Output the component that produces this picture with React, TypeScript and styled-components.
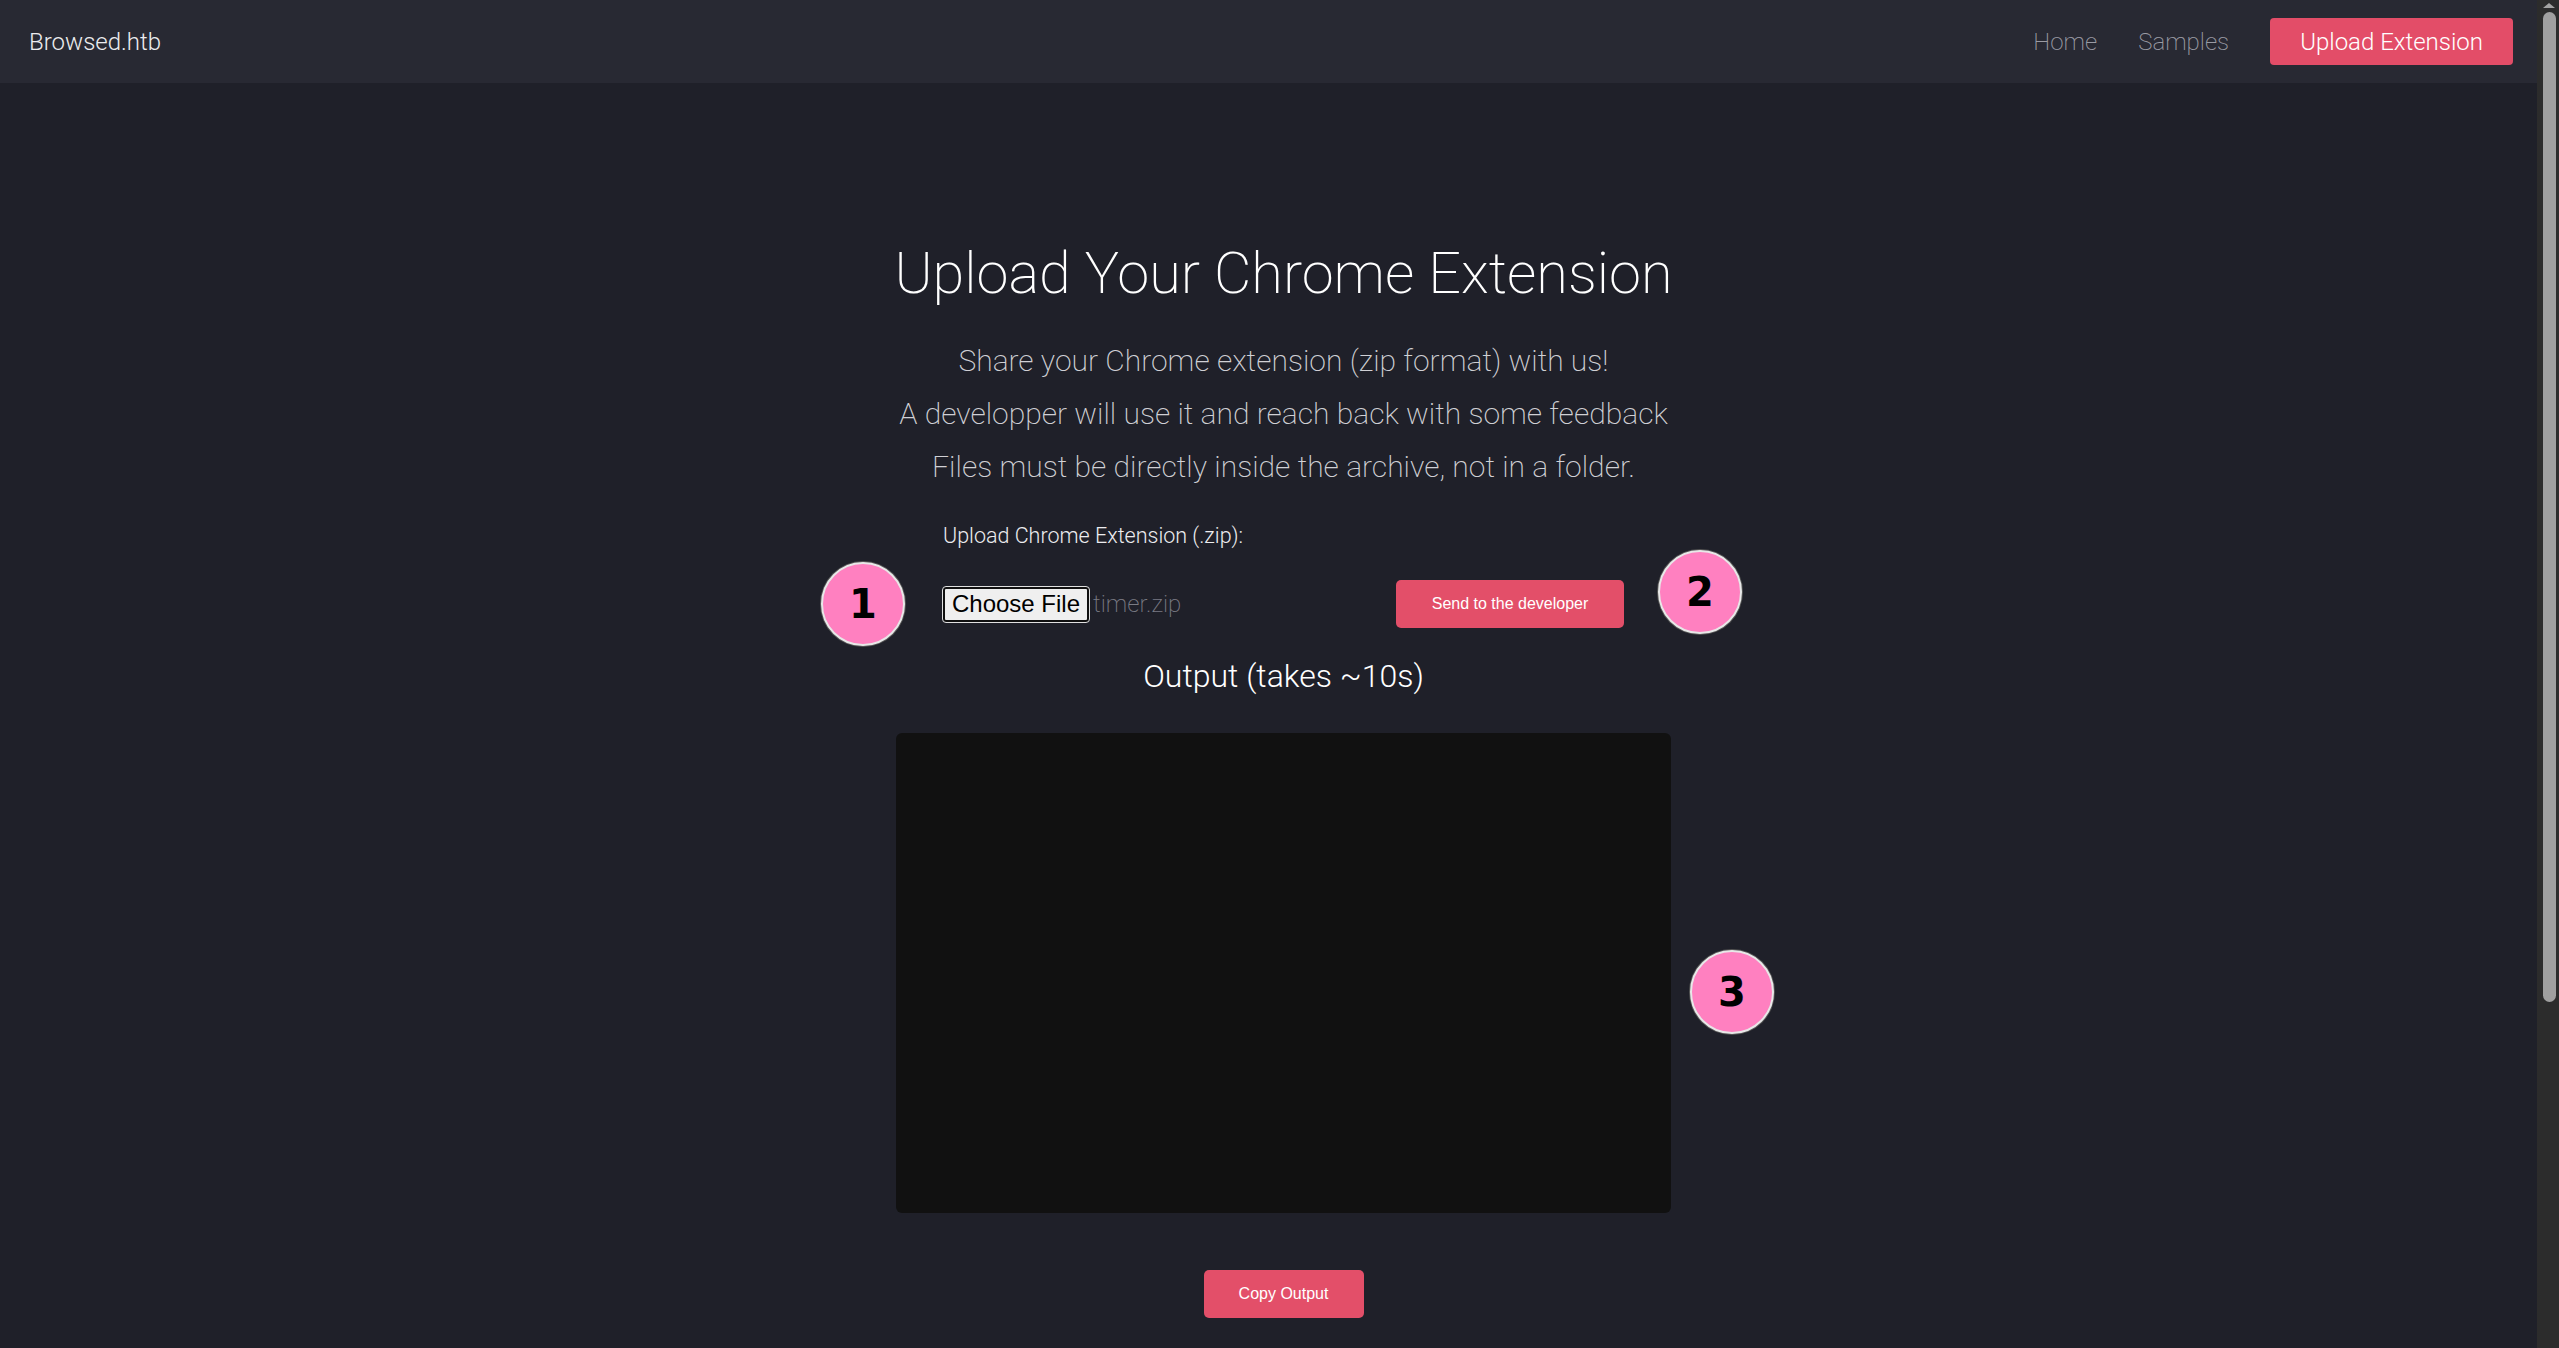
import styled, { createGlobalStyle } from "styled-components";

const GlobalStyle = createGlobalStyle`
  body {
    margin: 0;
    background: #1f2029;
    font-family: Roboto, "Noto Sans", sans-serif;
    color: #ffffff;
  }
`;

export default function App(): JSX.Element {
  return (
    <Shell>
      <GlobalStyle />
      <Pane>
        <NavBar>
          <Brand>Browsed.htb</Brand>
          <NavLinks>
            <NavLink>Home</NavLink>
            <NavLink>Samples</NavLink>
            <NavButton>Upload Extension</NavButton>
          </NavLinks>
        </NavBar>
        <Main>
          <Title>Upload Your Chrome Extension</Title>
          <Lead>
            <LeadLine>Share your Chrome extension (zip format) with us!</LeadLine>
            <LeadLine>A developper will use it and reach back with some feedback</LeadLine>
            <LeadLine>Files must be directly inside the archive, not in a folder.</LeadLine>
          </Lead>
          <UploadForm>
            <FieldLabel>Upload Chrome Extension (.zip):</FieldLabel>
            <FormRow>
              <FilePicker>
                <ChooseButton type="button">Choose File</ChooseButton>
                <FileName>timer.zip</FileName>
              </FilePicker>
              <PinkButton type="button" $wide>
                Send to the developer
              </PinkButton>
            </FormRow>
          </UploadForm>
          <OutputTitle>Output (takes ~10s)</OutputTitle>
          <OutputBox />
          <PinkButton type="button">Copy Output</PinkButton>
        </Main>
        <Marker style={{ left: 821, top: 562 }}>1</Marker>
        <Marker style={{ left: 1658, top: 550 }}>2</Marker>
        <Marker style={{ left: 1690, top: 950 }}>3</Marker>
      </Pane>
      <ScrollBar>
        <ScrollArrow />
        <ScrollThumb />
      </ScrollBar>
    </Shell>
  );
}

const Shell = styled("div")`
  display: flex;
  height: 100vh;
  overflow: hidden;
`;
const Pane = styled("div")`
  position: relative;
  flex: 1;
  min-width: 0;
`;
const ScrollBar = styled("div")`
  width: 22px;
  display: flex;
  flex-direction: column;
  align-items: center;
  padding-top: 3px;
  padding-left: 2px;
  box-sizing: border-box;
  background: #2c2c2c;
`;
const ScrollArrow = styled("div")`
  width: 0;
  height: 0;
  border-left: 6px solid transparent;
  border-right: 6px solid transparent;
  border-bottom: 5px solid #a3a3a3;
`;
const ScrollThumb = styled("div")`
  width: 13px;
  height: 990px;
  margin-top: 4px;
  border-radius: 7px;
  background: #a0a0a0;
`;
const NavBar = styled("nav")`
  display: flex;
  align-items: center;
  justify-content: space-between;
  height: 83px;
  padding: 0 24px 0 29px;
  background: #282933;
`;
const Brand = styled("div")`
  font-size: 24px;
  font-weight: 300;
  color: #ececef;
`;
const NavLinks = styled("div")`
  display: flex;
  align-items: center;
`;
const NavLink = styled("a")`
  font-size: 24px;
  font-weight: 200;
  color: #9a9ba4;
  margin-right: 41px;
  cursor: pointer;
`;
const NavButton = styled("button")`
  height: 47px;
  padding: 0 30px;
  border: none;
  border-radius: 4px;
  background: #e34d68;
  color: #ffffff;
  font-family: Roboto, sans-serif;
  font-size: 24px;
  font-weight: 300;
  cursor: pointer;
`;
const Main = styled("main")`
  display: flex;
  flex-direction: column;
  align-items: center;
  padding: 150px 0 0 30px;
`;
const Title = styled("h1")`
  margin: 0;
  font-size: 57.6px;
  line-height: 82px;
  font-weight: 200;
  color: #ffffff;
`;
const Lead = styled("div")`
  margin-top: 19px;
  text-align: center;
`;
const LeadLine = styled("p")`
  margin: 0;
  font-size: 30px;
  line-height: 53px;
  font-weight: 200;
  color: #d0d0d5;
`;
const UploadForm = styled("form")`
  width: 681px;
  margin-top: 28px;
`;
const FieldLabel = styled("label")`
  display: block;
  font-size: 21.5px;
  line-height: 30px;
  font-weight: 300;
  color: #ececef;
`;
const FormRow = styled("div")`
  display: flex;
  align-items: center;
  justify-content: space-between;
  margin-top: 29px;
`;
const FilePicker = styled("div")`
  display: flex;
  align-items: center;
  gap: 4px;
`;
const ChooseButton = styled("button")`
  height: 35px;
  width: 146px;
  padding: 0;
  border: 2px solid #101010;
  outline: 1px solid #e0e0e0;
  border-radius: 3px;
  background: #efefef;
  color: #000000;
  font-family: "Liberation Sans", Arial, sans-serif;
  font-size: 24px;
`;
const FileName = styled("span")`
  font-size: 24px;
  font-weight: 200;
  color: #7a7b84;
`;
const PinkButton = styled("button")<{ $wide?: boolean }>`
  width: ${(p) => (p.$wide ? "228px" : "160px")};
  height: 48px;
  margin-top: ${(p) => (p.$wide ? "0" : "57px")};
  border: none;
  border-radius: 5px;
  background: #e34f69;
  color: #ffffff;
  font-family: "Liberation Sans", Arial, sans-serif;
  font-size: 16px;
  cursor: pointer;
`;
const OutputTitle = styled("h3")`
  margin: 26px 0 0;
  font-size: 32px;
  line-height: 44px;
  font-weight: 300;
  color: #ffffff;
`;
const OutputBox = styled("div")`
  width: 775px;
  height: 480px;
  margin-top: 35px;
  border-radius: 6px;
  background: #111111;
`;
const Marker = styled("div")`
  position: absolute;
  box-sizing: border-box;
  width: 84px;
  height: 84px;
  display: flex;
  align-items: center;
  justify-content: center;
  border-radius: 50%;
  background: #ff80c0;
  border: 2px solid #e8e8e8;
  box-shadow: 0 0 0 1px #555;
  color: #000000;
  font-family: "DejaVu Sans", sans-serif;
  font-weight: 700;
  font-size: 40px;
`;
